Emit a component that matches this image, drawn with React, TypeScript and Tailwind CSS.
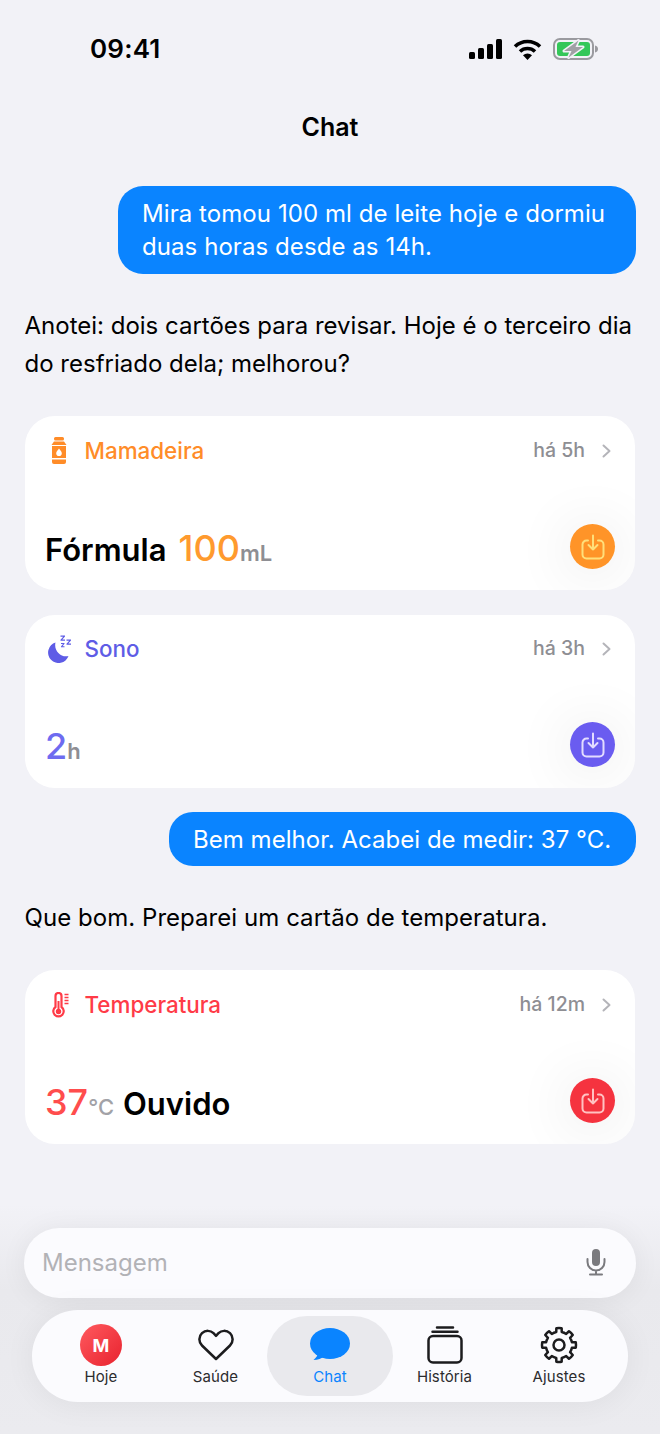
import React from "react";

const Download = ({ color }: { color: string }) => (
  <svg width="26" height="26" viewBox="0 0 26 26" fill="none" stroke={color} strokeWidth="2" strokeLinecap="round" strokeLinejoin="round">
    <path d="M8 6.500H6.500a4 4 0 0 0-4 4v10a4 4 0 0 0 4 4h13a4 4 0 0 0 4-4v-10a4 4 0 0 0-4-4H18" />
    <path d="M13 1.500v14M8.500 11 13 15.500l4.500-4.500" />
  </svg>
);

const Bottle = () => (
  <svg width="16" height="28" viewBox="0 0 16 28" fill="#ff8c28">
    <rect x="3" y="0" width="10" height="3.500" rx="1.500" />
    <path d="M3 4.500h10l2.500 3.500H.5z" />
    <path fillRule="evenodd" d="M1 9h14v12H1zM8 11.500c-1.500 2-2.800 3.300-2.800 4.800a2.800 2.800 0 0 0 5.600 0c0-1.500-1.300-2.800-2.800-4.800z" />
    <path d="M1 22.500h14V25a2 2 0 0 1-2 2H3a2 2 0 0 1-2-2z" />
  </svg>
);

const Moon = () => (
  <svg width="25" height="28" viewBox="0 0 25 28" fill="#5e5ce6">
    <path d="M8.500 7.500A10.500 10.500 0 1 0 21.500 21C14 23 6.500 15.500 8.500 7.500z" />
    <path d="M13.500.5h4.500v1L15.300 4.500H18v1.200h-4.500v-1l2.700-3h-2.700zM19.500 4.500H24v1l-2.700 3H24v1.200h-4.500v-1l2.700-3h-2.700zM14 8h3.500v.8l-2 2.400h2v1H14v-.8l2-2.400h-2z" />
  </svg>
);

const Thermo = () => (
  <svg className="ml-[3px]" width="18" height="26" viewBox="0 0 18 26" fill="none" stroke="#ff3b47" strokeWidth="2.200">
    <path d="M3.500 15V4a3 3 0 0 1 6 0v11a5.200 5.200 0 1 1-6 0z" />
    <circle cx="6.500" cy="19.500" r="2.700" fill="#ff3b47" stroke="none" />
    <path d="M6.500 9v9" strokeWidth="2" />
    <path d="M12.500 2.500h4M12.500 5.500h4M12.500 8.500h4M12.500 11.500h4" strokeWidth="1.300" />
  </svg>
);

const gearPath = (() => {
  const cx = 19, cy = 19, rOut = 17, rRoot = 13.2;
  const pt = (r: number, deg: number) => {
    const a = (deg * Math.PI) / 180;
    return `${(cx + r * Math.cos(a)).toFixed(2)} ${(cy + r * Math.sin(a)).toFixed(2)}`;
  };
  let d = "";
  for (let i = 0; i < 8; i++) {
    const a = -90 + i * 45;
    d += `${i === 0 ? "M" : "A" + rRoot + " " + rRoot + " 0 0 1 "}${pt(rRoot, a - 12)} `;
    d += `L${pt(rOut, a - 9)} A${rOut} ${rOut} 0 0 1 ${pt(rOut, a + 9)} L${pt(rRoot, a + 12)} `;
  }
  return d + `A${rRoot} ${rRoot} 0 0 1 ${pt(rRoot, -102)}Z`;
})();

const Card = ({
  icon, title, titleClass, time, btn, iconColor, compact, children,
}: {
  icon: React.ReactNode; title: string; titleClass: string; time: string; btn: string; iconColor: string; compact?: boolean; children: React.ReactNode;
}) => (
  <div className={`mx-[25px] rounded-[30px] bg-white flex flex-col pl-[20px] pr-[20px] relative overflow-hidden ${compact ? "h-[173px]" : "h-[174px]"}`}>
    <div className={`flex items-center ${compact ? "h-[68px]" : "h-[70px]"}`}>
      <div className="ml-[1px] w-[26px] h-[30px] flex items-center justify-center mr-[12.5px]">{icon}</div>
      <span className={`text-[22.4px] font-medium ${titleClass}`}>{title}</span>
      <span className="ml-auto text-[19.5px] font-medium text-[#8e8e93]">{time}</span>
      <svg className="ml-[17px] mr-[4px]" width="9" height="14" viewBox="0 0 9 14" fill="none" stroke="#b4b4b9" strokeWidth="2" strokeLinecap="round" strokeLinejoin="round">
        <path d="M1.500 1.500 7.500 7l-6 5.500" />
      </svg>
    </div>
    <div className={`flex items-center justify-between leading-[51px] ${compact ? "mt-[29.5px]" : "mt-[28.5px]"}`}>
      <div className="flex items-baseline mt-[8px]">{children}</div>
      <div className={`w-[45px] h-[45px] rounded-full flex items-center justify-center shadow-[0_4px_60px_rgba(0,0,0,0.12)] ${btn}`}>
        <Download color={iconColor} />
      </div>
    </div>
  </div>
);

const Tab = ({ icon, label, active }: { icon: React.ReactNode; label: string; active?: boolean }) => (
  <div className="w-[114.5px] flex justify-center">
    <div className={`shrink-0 w-[126px] h-[80px] rounded-[40px] flex flex-col items-center ${active ? "bg-[#e9e9ed]" : ""}`}>
      <div className="h-[44px] mt-[7px] flex items-center justify-center">{icon}</div>
      <span className={`text-[15px] font-normal tracking-[0.1px] mt-[1px] leading-[18px] ${active ? "text-[#0a84ff]" : "text-[#2c2c2e]"}`}>{label}</span>
    </div>
  </div>
);

export default function App() {
  return (
    <div className="w-[660px] h-[1434px] overflow-hidden flex flex-col bg-[linear-gradient(to_bottom,#f2f2f7_0%,#f2f2f7_84%,#e9e9ed_90%,#ebebef_100%)] text-black font-['Inter',sans-serif]">
      <div className="h-[98px] flex items-center justify-between pl-[90px] pr-[61px]">
        <span className="text-[26px] font-semibold tracking-[0.2px] -mt-[2px]">09:41</span>
        <div className="flex items-center gap-[11px]">
          <svg width="34" height="20" viewBox="0 0 34 20" fill="#000">
            <rect x="0" y="13" width="6" height="7" rx="1.500" />
            <rect x="9" y="9" width="6" height="11" rx="1.500" />
            <rect x="18" y="5" width="6" height="15" rx="1.500" />
            <rect x="27" y="0" width="6" height="20" rx="1.500" />
          </svg>
          <svg className="-ml-[1px]" width="29" height="21" viewBox="0 0 29 21" fill="none" stroke="#000" strokeWidth="3.600">
            <path d="M2 7.500a18 18 0 0 1 25 0" />
            <path d="M7 12.500a11 11 0 0 1 15 0" />
            <path d="M14.500 21l-4.500-4.700a6.500 6.500 0 0 1 9 0z" fill="#000" stroke="none" />
          </svg>
          <svg width="46" height="22" viewBox="0 0 46 22">
            <rect x="1" y="1" width="39" height="20" rx="6" fill="none" stroke="#9a9a9f" strokeWidth="2" />
            <path d="M42 7.500c2 .3 3 1.700 3 3.500s-1 3.200-3 3.500z" fill="#9a9a9f" />
            <rect x="4" y="4" width="33" height="14" rx="3" fill="#34c759" />
            <path d="M25.500 2.500 11 13h7.500L15.500 19.500 30 9h-7.500z" fill="#a0a0a5" stroke="#f2f2f7" strokeWidth="3" paintOrder="stroke" strokeLinejoin="round" />
          </svg>
        </div>
      </div>

      <div className="h-[60px] flex items-center justify-center">
        <span className="text-[25px] font-semibold">Chat</span>
      </div>

      <div className="flex justify-end mt-[28px] mr-[24px]">
        <div className="w-[518px] h-[88px] rounded-[25px] bg-[#0a84ff] text-white text-[24px] tracking-[0.07px] leading-[33px] pl-[24px] pt-[11px]">
          Mira tomou 100 ml de leite hoje e dormiu<br />duas horas desde as 14h.
        </div>
      </div>

      <p className="ml-[24.500px] mr-[25px] mt-[33px] text-[24px] leading-[38px]">
        Anotei: dois cartões para revisar. Hoje é o terceiro dia<br />do resfriado dela; melhorou?
      </p>

      <div className="mt-[33px]">
        <Card icon={<Bottle />} title="Mamadeira" titleClass="text-[#ff8c28]" time="há 5h" btn="bg-[#ff9428]" iconColor="#ffdf7a">
          <span className="text-[31px] font-semibold mr-[12px]">Fórmula</span>
          <span className="text-[36px] font-medium text-[#ff9a2e]">100</span>
          <span className="text-[22px] font-semibold text-[#8e8e93]">mL</span>
        </Card>
      </div>

      <div className="mt-[25px]">
        <Card compact icon={<Moon />} title="Sono" titleClass="text-[#5e5ce6]" time="há 3h" btn="bg-[#6a5cf0]" iconColor="#e3dcff">
          <span className="text-[36px] font-medium text-[#6e6bf0]">2</span>
          <span className="text-[22px] font-semibold text-[#8e8e93]">h</span>
        </Card>
      </div>

      <div className="flex justify-end mt-[24px] mr-[24px]">
        <div className="w-[467px] h-[54px] rounded-[24px] bg-[#0a84ff] text-white text-[24px] tracking-[0.03px] leading-[55px] pl-[24px]">
          Bem melhor. Acabei de medir: 37 °C.
        </div>
      </div>

      <p className="ml-[24.500px] mr-[25px] mt-[33px] text-[24px] tracking-[0.05px] leading-[38px]">Que bom. Preparei um cartão de temperatura.</p>

      <div className="mt-[33px]">
        <Card icon={<Thermo />} title="Temperatura" titleClass="text-[#ff3b47]" time="há 12m" btn="bg-[#f5333f]" iconColor="#ffc2c2">
          <span className="text-[36px] font-medium text-[#ff4d4d]">37</span>
          <span className="text-[22px] font-medium text-[#a2a2a7] mr-[9px]">°C</span>
          <span className="text-[31px] font-semibold">Ouvido</span>
        </Card>
      </div>

      <div className="flex-1" />

      <div className="mx-[24px] h-[70px] rounded-[35px] bg-[#fbfbfe] flex items-center pl-[18px] pr-[30px] shadow-[0_2px_28px_rgba(0,0,0,0.06)]">
        <span className="text-[24px] text-[#b2b2b6]">Mensagem</span>
        <svg className="ml-auto -mt-[2px]" width="20" height="28" viewBox="0 0 20 28" fill="none" stroke="#7a7a7e" strokeWidth="2" strokeLinecap="round">
          <rect x="6" y="1" width="8" height="17" rx="4" fill="#7a7a7e" stroke="none" />
          <path d="M1.500 11v3a8.500 8.500 0 0 0 17 0v-3M10 22.500v4M4 26.500h12" />
        </svg>
      </div>

      <div className="mx-[32px] mt-[12px] mb-[32px] h-[92px] rounded-[46px] bg-[#fbfbfe] flex items-center justify-center shadow-[0_2px_32px_rgba(0,0,0,0.06)]">
        <Tab
          label="Hoje"
          icon={
            <div className="w-[42px] h-[42px] rounded-full bg-[linear-gradient(135deg,#ff5a5f,#e8222e)] flex items-center justify-center text-white text-[18px] font-bold">
              M
            </div>
          }
        />
        <Tab
          label="Saúde"
          icon={
            <svg width="36" height="32" viewBox="0 0 36 32" fill="none" stroke="#1c1c1e" strokeWidth="2.500" strokeLinejoin="round">
              <path d="M18 30 4 16.500C0.500 13 0.500 7.500 4 4.200 7.500 1 12.500 1.200 15.500 4.200L18 6.800l2.500-2.600c3-3 8-3.200 11.500 0 3.500 3.300 3.500 8.800 0 12.300z" />
            </svg>
          }
        />
        <Tab
          active
          label="Chat"
          icon={
            <svg width="40" height="34" viewBox="0 0 40 34" fill="#0a84ff">
              <ellipse cx="20" cy="15.500" rx="20" ry="15.500" />
              <path d="M8 24c0 3-1.500 5.500-4.500 8 4.500 0 8-1.500 11-4z" />
            </svg>
          }
        />
        <Tab
          label="História"
          icon={
            <svg width="36" height="38" viewBox="0 0 36 38" fill="none" stroke="#1c1c1e" strokeWidth="2.500" strokeLinecap="round">
              <rect x="1.500" y="10" width="33" height="26.500" rx="4.500" />
              <path d="M5.500 5.800h25M10 1.500h16" />
            </svg>
          }
        />
        <Tab
          label="Ajustes"
          icon={
            <svg width="38" height="38" viewBox="0 0 38 38" fill="none" stroke="#1c1c1e" strokeWidth="2.500" strokeLinejoin="round">
              <path d={gearPath} />
              <circle cx="19" cy="19" r="5.500" />
            </svg>
          }
        />
      </div>
    </div>
  );
}
